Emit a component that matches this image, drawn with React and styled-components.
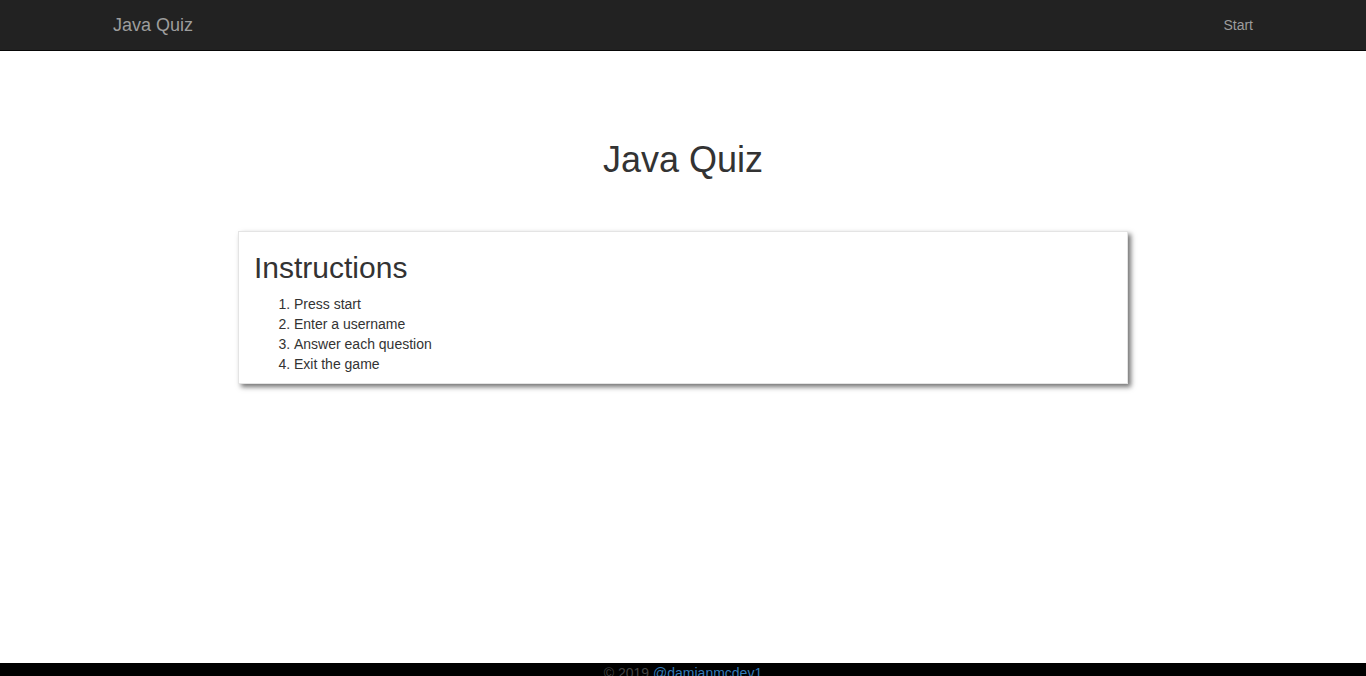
import React from "react";
import styled, { createGlobalStyle } from "styled-components";

const GlobalStyle = createGlobalStyle`
  html, body {
    margin: 0;
    padding: 0;
    overflow: hidden;
  }
  body {
    font-family: "Liberation Sans", Arial, Helvetica, sans-serif;
    font-size: 14px;
    line-height: 20px;
    color: #333;
    background: #fff;
  }
`;

const Navbar = styled.nav`
  height: 50px;
  background: #222;
  border-bottom: 1px solid #080808;
`;

const NavContainer = styled.div`
  width: 1170px;
  margin: 0 auto;
  padding: 0 15px;
  box-sizing: border-box;
  display: flex;
  justify-content: space-between;
  align-items: flex-start;
`;

const Brand = styled.a`
  margin-left: -15px;
  padding: 15px;
  font-size: 18px;
  line-height: 20px;
  color: #9d9d9d;
  text-decoration: none;
`;

const NavLink = styled.a`
  margin-right: -15px;
  padding: 15px;
  font-size: 14px;
  line-height: 20px;
  color: #9d9d9d;
  text-decoration: none;
`;

const Main = styled.main`
  height: 612px;
  display: flex;
  flex-direction: column;
  align-items: center;
`;

const Title = styled.h1`
  margin: 89px 0 0;
  font-size: 36px;
  line-height: 40px;
  font-weight: 500;
  color: #333;
`;

const Card = styled.section`
  width: 890px;
  margin-top: 51px;
  padding: 0 15px;
  box-sizing: border-box;
  background: #fff;
  border: 1px solid #e4e4e4;
  box-shadow: 3px 3px 5px rgba(0, 0, 0, 0.55);
`;

const CardTitle = styled.h2`
  margin: 19px 0 10px;
  font-size: 30px;
  line-height: 33px;
  font-weight: 500;
  color: #333;
`;

const Steps = styled.ol`
  margin: 0 0 9px;
  padding-left: 40px;
`;

const Footer = styled.footer`
  background: #000;
  text-align: center;
  font-size: 14px;
  line-height: 20px;
  color: #444;
  height: 40px;
`;

const FooterLink = styled.a`
  color: #337ab7;
  text-decoration: none;
`;

const steps = ["Press start", "Enter a username", "Answer each question", "Exit the game"];

const App = () => {
  return (
    <>
      <GlobalStyle />
      <Navbar>
        <NavContainer>
          <Brand href="#">Java Quiz</Brand>
          <NavLink href="#">Start</NavLink>
        </NavContainer>
      </Navbar>
      <Main>
        <Title>Java Quiz</Title>
        <Card>
          <CardTitle>Instructions</CardTitle>
          <Steps>
            {steps.map((s) => (
              <li key={s}>{s}</li>
            ))}
          </Steps>
        </Card>
      </Main>
      <Footer>
        © 2019 <FooterLink href="#">@damianmcdev1</FooterLink>
      </Footer>
    </>
  );
};

export default App;
